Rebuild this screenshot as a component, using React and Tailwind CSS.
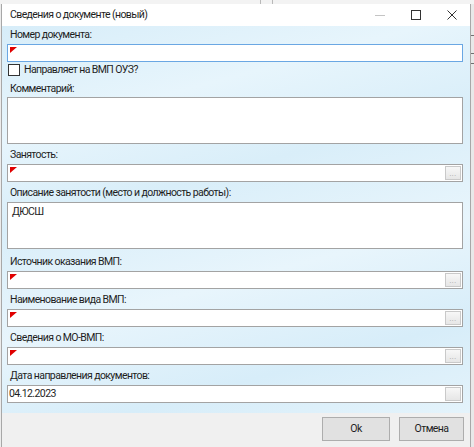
import React from "react";

const font = { fontFamily: 'Roboto, "Noto Sans", sans-serif' };

function Req() {
  return (
    <svg className="absolute left-[2px] top-[2px]" width="7" height="6" viewBox="0 0 7 6">
      <polygon points="0,0 7,0 0,6" fill="#e00000" />
    </svg>
  );
}

function Dots({ empty }) {
  return (
    <div className="absolute right-[1px] top-[1px] bottom-[1px] w-[16px] border border-[#c9c9c9] bg-[linear-gradient(#f7f7f7,#e6e6e6)] flex items-end justify-center">
      {!empty && <span className="text-[7px] leading-[9px] text-[#9a9a9a] tracking-[0.5px]">...</span>}
    </div>
  );
}

const txt = "text-[10.5px] tracking-[-0.6px] text-[#1e1e1e]";

function Label({ children, className = "" }) {
  return <div className={"h-[16px] leading-[16px] pl-[3px] " + txt + " " + className}>{children}</div>;
}

function Input({ req, dots, empty, value, focused, className = "" }) {
  return (
    <div
      className={
        "relative h-[18px] bg-white border " +
        (focused ? "border-[#6aa7e3]" : "border-[#a3a3a3]") +
        " " +
        className
      }
    >
      {req && <Req />}
      {value && <div className={"pl-[1px] leading-[16px] " + txt}>{value}</div>}
      {dots && <Dots empty={empty} />}
    </div>
  );
}

export default function App() {
  return (
    <div className="w-[474px] h-[447px] overflow-hidden bg-[#ececec] flex flex-col" style={font}>
      <div className="h-[4px] shrink-0 bg-[#f3f3f3] relative">
        <div className="absolute left-[260px] top-0 bottom-0 w-[1px] bg-[#b9b9b9]" />
        <div className="absolute left-[272px] top-0 bottom-0 w-[1px] bg-[#b9b9b9]" />
      </div>
      <div className="flex flex-1 min-h-0">
        <div className="w-[470px] ml-[1px] border-l border-r border-[#a8a8a8] flex flex-col bg-white">
          <div className="h-[22px] shrink-0 flex items-center bg-white">
            <div className={"pl-[8px] flex-1 " + txt}>Сведения о документе (новый)</div>
            <div className="w-[10px] h-[1px] bg-[#c4c4c4] mr-[26px]" />
            <svg width="10" height="10" viewBox="0 0 10 10" className="mr-[26px]">
              <rect x="0.5" y="0.5" width="9" height="9" fill="none" stroke="#333" strokeWidth="1" />
            </svg>
            <svg width="10" height="10" viewBox="0 0 10 10" className="mr-[13px]">
              <path d="M0.5 0.5 L9.5 9.5 M9.5 0.5 L0.5 9.5" stroke="#333" strokeWidth="1" />
            </svg>
          </div>
          <div className="flex flex-col pl-[5px] pr-[7px] pt-[1px] pb-[10px] bg-[linear-gradient(165deg,#d7edf9_0%,#e7f5fc_22%,#d9eef9_40%,#e8f5fc_62%,#d7edf9_82%,#e4f3fb_100%)]">
            <Label>Номер документа:</Label>
            <Input req focused className="mt-[1px]" />
            <div className="h-[16px] flex items-center gap-[4px] pl-[1px]">
              <div className="w-[12px] h-[12px] bg-white border border-[#333]" />
              <span className={"leading-[16px] " + txt}>Направляет на ВМП ОУЗ?</span>
            </div>
            <Label className="mt-[3px]">Комментарий:</Label>
            <div className="h-[47px] bg-white border border-[#a3a3a3]" />
            <Label className="mt-[3px]">Занятость:</Label>
            <Input req dots className="mt-[1px]" />
            <Label className="mt-[3px]">Описание занятости (место и должность работы):</Label>
            <div className={"h-[47px] mt-[1px] bg-white border border-[#a3a3a3] pl-[4px] pt-[1px] leading-[16px] " + txt}>
              ДЮСШ
            </div>
            <Label className="mt-[5px]">Источник оказания ВМП:</Label>
            <Input req dots className="mt-[1px]" />
            <Label className="mt-[3px]">Наименование вида ВМП:</Label>
            <Input req dots className="mt-[1px]" />
            <Label className="mt-[3px]">Сведения о МО-ВМП:</Label>
            <Input req dots className="mt-[1px]" />
            <Label className="mt-[3px]">Дата направления документов:</Label>
            <Input dots empty value="04.12.2023" className="mt-[1px]" />
          </div>
          <div className="flex-1 bg-[#f0f0f0] flex justify-end items-start pt-[4px] pr-[6px] gap-[9px]">
            <div className={"w-[68px] h-[24px] bg-[#e1e1e1] border border-[#adadad] flex items-center justify-center " + txt}>
              Ok
            </div>
            <div className={"w-[65px] h-[24px] bg-[#e1e1e1] border border-[#adadad] flex items-center justify-center " + txt}>
              Отмена
            </div>
          </div>
        </div>
        <div className="flex-1 bg-[#e9e9e9] relative">
          <div className="absolute left-0 right-0 top-[31px] h-[1px] bg-[#707070]" />
          <div className="absolute left-0 right-0 top-[49px] h-[1px] bg-[#707070]" />
          <div className="absolute left-0 right-0 top-[59px] h-[1px] bg-[#707070]" />
        </div>
      </div>
    </div>
  );
}
